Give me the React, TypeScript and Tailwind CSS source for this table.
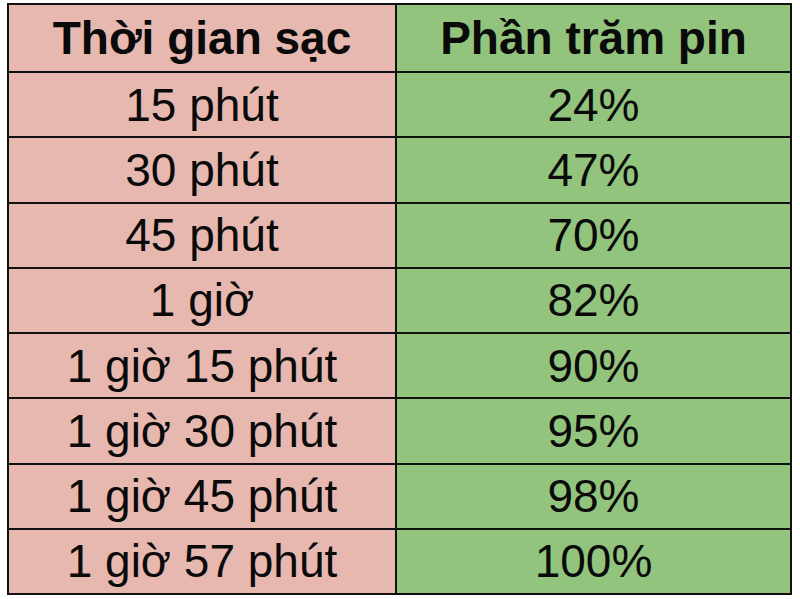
import React from "react";

const rows: [string, string][] = [
  ["15 phút", "24%"],
  ["30 phút", "47%"],
  ["45 phút", "70%"],
  ["1 giờ", "82%"],
  ["1 giờ 15 phút", "90%"],
  ["1 giờ 30 phút", "95%"],
  ["1 giờ 45 phút", "98%"],
  ["1 giờ 57 phút", "100%"],
];

export default function App() {
  return (
    <div
      className="w-[800px] h-[599px] bg-white pt-[3px] pl-[7px]"
      style={{ fontFamily: '"Liberation Sans", Arial, sans-serif' }}
    >
      <table className="border-collapse w-[785px] text-[46px] leading-none text-[#0a0a0a]">
        <tbody>
          <tr className="h-[68px]">
            <td className="w-[388px] border-2 border-[#111] bg-[#e6b8af] text-center font-bold align-middle p-0">
              Thời gian sạc
            </td>
            <td className="border-2 border-[#111] bg-[#93c47d] text-center font-bold align-middle p-0">
              Phần trăm pin
            </td>
          </tr>
          {rows.map(([a, b]) => (
            <tr key={a} className="h-[65.25px]">
              <td className="border-2 border-[#111] bg-[#e6b8af] text-center align-middle p-0">
                {a}
              </td>
              <td className="border-2 border-[#111] bg-[#93c47d] text-center align-middle p-0">
                {b}
              </td>
            </tr>
          ))}
        </tbody>
      </table>
    </div>
  );
}
